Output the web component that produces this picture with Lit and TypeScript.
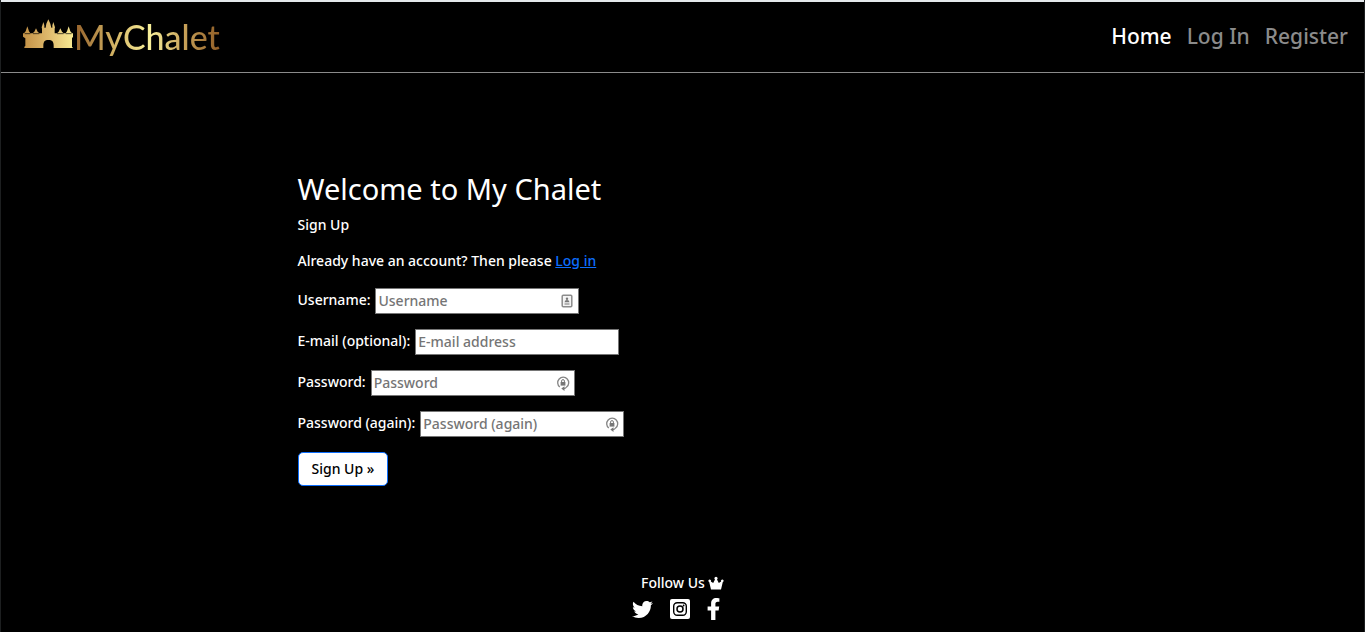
import { LitElement, html, css, svg, nothing } from "lit";
import { customElement } from "lit/decorators.js";

const castle = svg`
  <defs>
    <linearGradient id="gold" x1="0" x2="1" y1="0" y2="0">
      <stop offset="0" stop-color="#c29045" />
      <stop offset="0.5" stop-color="#deb96c" />
      <stop offset="1" stop-color="#f8ea92" />
    </linearGradient>
  </defs>
  <path fill="url(#gold)" d="M3 42 L8 36 L13 21 L18 36 L22 42 H29 L34 37 L39 27 L44 37 L49 42 H57 V28 L56 24 L58 18 L61 8 L64 18 V25 H68 L70 13 L76 0 L82 13 L85 25 H88 V18 L91 8 L94 18 L96 24 L95 28 V42 H102 L107 37 L112 27 L117 37 L122 42 H128 L132 36 L137 21 L142 36 L147 42 H150 V52 L147 57 V82 L150 86 H92 V80 C92 67 88 62 76 62 C65 62 61 67 61 80 V86 H4 V82 L7 80 V57 L0 52 V42 Z" />
  <path fill="none" stroke="#000" stroke-width="2" d="M5 43 H22 M30 43 H49 M102 43 H122 M128 43 H146" />`;

const crown = svg`<path fill="currentColor" d="M3 13.500 L1.200 6 A1.300 1.300 0 1 1 2.800 5.500 L5.200 7 L7 3.500 A1.500 1.500 0 1 1 9 3.500 L10.800 7 L13.200 5.500 A1.300 1.300 0 1 1 14.800 6 L13 13.500 Z" />`;

const twitter = svg`<path fill="currentColor" d="M459.370 151.716c.325 4.548.325 9.097.325 13.645 0 138.720-105.583 298.558-298.558 298.558-59.452 0-114.680-17.219-161.137-47.106 8.447.974 16.568 1.299 25.340 1.299 49.055 0 94.213-16.568 130.274-44.832-46.132-.975-84.792-31.188-98.112-72.772 6.498.974 12.995 1.624 19.818 1.624 9.421 0 18.843-1.300 27.614-3.573-48.081-9.747-84.143-51.980-84.143-102.985v-1.299c13.969 7.797 30.214 12.670 47.431 13.319-28.264-18.843-46.781-51.005-46.781-87.391 0-19.492 5.197-37.360 14.294-52.954 51.655 63.675 129.300 105.258 216.365 109.807-1.624-7.797-2.599-15.918-2.599-24.040 0-57.828 46.782-104.934 104.934-104.934 30.213 0 57.502 12.670 76.670 33.137 23.715-4.548 46.456-13.320 66.599-25.340-7.798 24.366-24.366 44.833-46.132 57.827 21.117-2.273 41.584-8.122 60.426-16.243-14.292 20.791-32.161 39.308-52.628 54.253z" />`;

const instagram = svg`
  <rect width="20" height="20" rx="2" fill="currentColor" />
  <rect x="3.700" y="3.700" width="12.600" height="12.600" rx="3.500" fill="none" stroke="#000" stroke-width="1.400" />
  <circle cx="10" cy="10" r="3" fill="none" stroke="#000" stroke-width="1.500" />
  <circle cx="13.600" cy="6.500" r="0.900" fill="#000" />`;

const facebook = svg`<path fill="currentColor" d="M279.140 288l14.220-92.660h-88.910v-60.130c0-25.350 12.420-50.060 52.240-50.060h40.420V6.260S260.430 0 225.360 0c-73.220 0-121.080 44.380-121.080 124.720v70.620H22.890V288h81.390v224h100.170V288z" />`;

const card = svg`
  <rect x="2.200" y="1.200" width="9.600" height="11.600" rx="1" fill="#f4f4f4" stroke="#8c8c8c" stroke-width="1.500" />
  <circle cx="7" cy="4.800" r="1.200" fill="#777" />
  <path fill="#777" d="M4.500 8.300 Q4.700 6 7 6 T9.500 8.300 Z M4.500 9.500 H9.500 V10.500 H4.500 Z" />`;

const lock = svg`
  <path fill="none" stroke="#858585" stroke-width="1.300" d="M3.800 11 A5.500 5.500 0 1 1 10.600 11 Q9.500 12.600 7.500 12.600" />
  <path fill="#777" d="M8.500 10.200 V15 L5.300 12.600 Z" />
  <rect x="4.600" y="6" width="4.800" height="3.600" fill="#777" />
  <path fill="none" stroke="#777" stroke-width="1" d="M5.600 6 V5 A1.400 1.400 0 0 1 8.400 5 V6" />`;

const fields = [
  { id: "username", label: "Username:", hint: "Username", type: "text", icon: card },
  { id: "email", label: "E-mail (optional):", hint: "E-mail address", type: "email", icon: null },
  { id: "password1", label: "Password:", hint: "Password", type: "password", icon: lock },
  { id: "password2", label: "Password (again):", hint: "Password (again)", type: "password", icon: lock },
];

@customElement("app-root")
export class AppRoot extends LitElement {
  static styles = css`
    :host {
      display: flex;
      flex-direction: column;
      box-sizing: border-box;
      min-height: 100vh;
      border: solid #1d1f20;
      border-width: 0 1px;
      background: #000;
      color: #fff;
      font: 500 14px/22px "Noto Sans", "Open Sans", sans-serif;
    }
    * { box-sizing: border-box; }
    svg { display: block; }
    .bar {
      display: flex;
      align-items: center;
      justify-content: space-between;
      height: 73px;
      padding: 0 16px 0 22px;
      border-top: 2px solid #e4e8eb;
      border-bottom: 1px solid #8b8b8b;
    }
    .brand {
      display: flex;
      align-items: center;
      gap: 1px;
      text-decoration: none;
    }
    .castle { width: 50px; height: 30px; margin-bottom: 6px; }
    .name {
      font: 500 34px/44px Lato, sans-serif;
      color: transparent;
      background: linear-gradient(90deg, #94602a, #d9bb6a 30%, #f8f09a 52%, #c9a35a 75%, #8f5c25);
      -webkit-background-clip: text;
      background-clip: text;
    }
    .menu { display: flex; gap: 15px; padding-bottom: 2px; font-size: 21px; line-height: 32px; }
    .menu a { color: #8b8b8b; text-decoration: none; }
    .menu .current { color: #fff; }
    main {
      flex: 1;
      width: 100%;
      max-width: 770px;
      margin: 0 auto;
      padding-top: 98px;
    }
    h1 { margin: 0 0 7px; font-size: 29px; line-height: 36px; font-weight: 400; }
    p { margin: 0 0 14px; }
    p a { color: #0d6efd; }
    form { padding-top: 2px; }
    .row { display: flex; align-items: center; gap: 5px; margin-bottom: 15px; }
    .row label { padding-bottom: 2px; }
    .box { position: relative; }
    input {
      display: block;
      width: 204px;
      height: 26px;
      padding: 0 2px 2px;
      border: 1px solid #767676;
      border-radius: 0;
      background: #fff;
      color: #000;
      font: inherit;
    }
    input::placeholder { color: #757575; opacity: 1; }
    .mark { position: absolute; right: 5px; top: 6px; width: 14px; height: 15px; }
    button {
      height: 34px;
      padding: 0 13px;
      border: 1px solid #0d6efd;
      border-radius: 5px;
      background: #fff;
      color: #000;
      font: inherit;
    }
    footer { display: flex; flex-direction: column; align-items: center; padding-bottom: 12px; }
    .follow { display: flex; align-items: center; gap: 3px; margin-bottom: 4px; }
    .crown { width: 16px; height: 14px; }
    .social { display: flex; align-items: center; gap: 17px; padding-right: 14px; }
    .social a { color: #fff; }
    .twitter { width: 21px; height: 21px; }
    .instagram { width: 20px; height: 20px; }
    .facebook { width: 13px; height: 22px; }
  `;

  render() {
    return html`
      <header class="bar">
        <a class="brand" href="#">
          <svg class="castle" viewBox="0 0 150 88" aria-hidden="true">${castle}</svg>
          <span class="name">MyChalet</span>
        </a>
        <nav class="menu">
          <a class="current" href="#">Home</a>
          <a href="#">Log In</a>
          <a href="#">Register</a>
        </nav>
      </header>
      <main>
        <h1>Welcome to My Chalet</h1>
        <p>Sign Up</p>
        <p>Already have an account? Then please <a href="#">Log in</a></p>
        <form>
          ${fields.map(
            (f) => html`
              <div class="row">
                <label for=${f.id}>${f.label}</label>
                <div class="box">
                  <input id=${f.id} type=${f.type} placeholder=${f.hint} />
                  ${f.icon ? html`<svg class="mark" viewBox="0 0 14 15" aria-hidden="true">${f.icon}</svg>` : nothing}
                </div>
              </div>
            `
          )}
          <button type="submit">Sign Up »</button>
        </form>
      </main>
      <footer>
        <div class="follow">
          Follow Us
          <svg class="crown" viewBox="0 0 16 14" aria-hidden="true">${crown}</svg>
        </div>
        <div class="social">
          <a href="#" aria-label="Twitter"><svg class="twitter" viewBox="0 0 512 512">${twitter}</svg></a>
          <a href="#" aria-label="Instagram"><svg class="instagram" viewBox="0 0 20 20">${instagram}</svg></a>
          <a href="#" aria-label="Facebook"><svg class="facebook" viewBox="22 0 276 512">${facebook}</svg></a>
        </div>
      </footer>
    `;
  }
}
